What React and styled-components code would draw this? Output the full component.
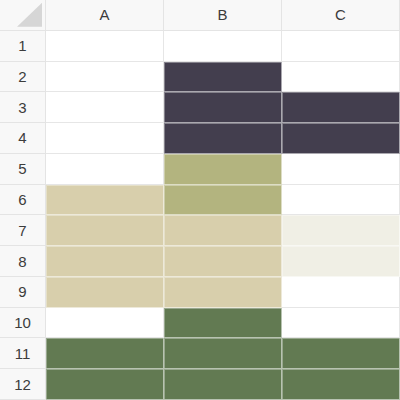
import React from "react";
import styled, { createGlobalStyle } from "styled-components";

const Global = createGlobalStyle`
  html, body { margin: 0; padding: 0; background: #ffffff; }
  body { font-family: "Liberation Sans", Arial, sans-serif; }
`;

const Sheet = styled.div`
  display: grid;
  grid-template-columns: 46px repeat(3, 118px);
  grid-template-rows: repeat(13, 1fr);
  width: 400px;
  height: 400px;
  overflow: hidden;
`;

const HeaderCell = styled.div`
  box-sizing: border-box;
  display: flex;
  align-items: center;
  justify-content: center;
  background: #f8f8f8;
  border-right: 1px solid #e4e4e4;
  border-bottom: 1px solid #e4e4e4;
  color: #3c3c3c;
  font-size: 15px;
`;

const Corner = styled(HeaderCell)`
  position: relative;
`;

const Triangle = styled.div`
  position: absolute;
  right: 3px;
  bottom: 3px;
  width: 25px;
  height: 24px;
  background: #d6d6d6;
  clip-path: polygon(100% 0, 100% 100%, 0 100%);
`;

const Cell = styled.div`
  box-sizing: border-box;
  background: ${(p) => p.$fill || "#ffffff"};
  border-right: 1px solid ${(p) => (p.$fill ? "rgba(255,255,255,0.55)" : "#e6e6e6")};
  border-bottom: 1px solid ${(p) => (p.$fill ? "rgba(255,255,255,0.55)" : "#e6e6e6")};
  box-shadow: ${(p) => (p.$fill ? "inset 1px 1px 0 rgba(255,255,255,0.35)" : "none")};
`;

const D = "#433e4e";
const O = "#b3b47f";
const T = "#d8cfac";
const L = "#f0efe5";
const G = "#627a52";

const rows = [
  [null, null, null],
  [null, D, null],
  [null, D, D],
  [null, D, D],
  [null, O, null],
  [T, O, null],
  [T, T, L],
  [T, T, L],
  [T, T, null],
  [null, G, null],
  [G, G, G],
  [G, G, G],
];

export default function App() {
  return (
    <>
      <Global />
      <Sheet>
        <Corner>
          <Triangle />
        </Corner>
        {["A", "B", "C"].map((c) => (
          <HeaderCell key={c}>{c}</HeaderCell>
        ))}
        {rows.map((r, i) => (
          <React.Fragment key={i}>
            <HeaderCell>{i + 1}</HeaderCell>
            {r.map((f, j) => (
              <Cell key={j} $fill={f} />
            ))}
          </React.Fragment>
        ))}
      </Sheet>
    </>
  );
}
